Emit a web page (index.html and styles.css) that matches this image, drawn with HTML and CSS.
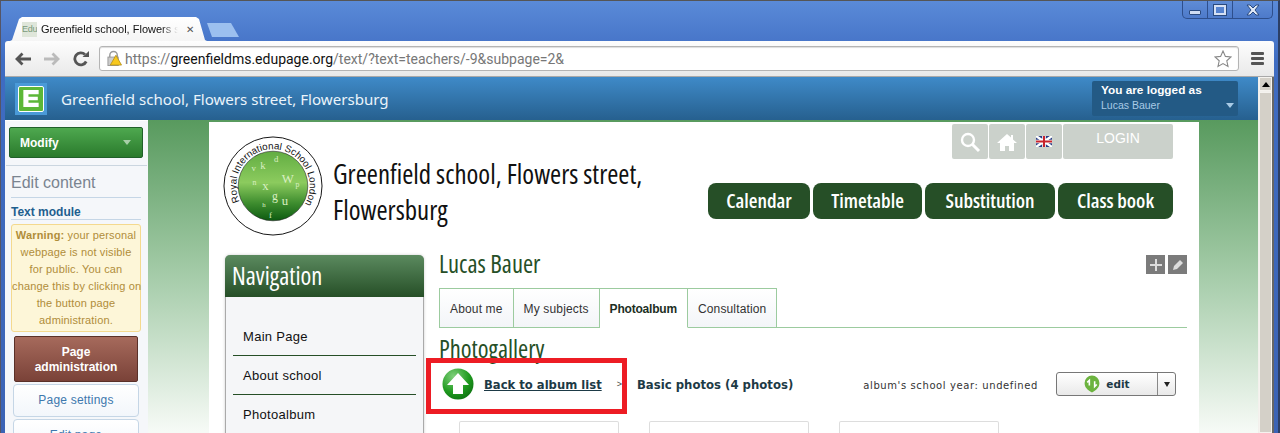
FILE: index.html
```html
<!DOCTYPE html>
<html lang="en">
  <head>
    <meta charset="UTF-8" />
    <title>Greenfield school, Flowers street, Flowersburg</title>
    <link rel="stylesheet" href="styles.css">
  </head>
  <body>
    <div class="browser">
      <div class="tabstrip">
        <div class="tab">
          <span class="favicon">Edu</span>
          <span class="tab-title">Greenfield school, Flowers st</span>
          <span class="tab-close">&#x2715;</span>
        </div>
        <div class="new-tab"></div>
        <div class="win-controls">
          <span class="win-btn"><i class="win-min"></i></span>
          <span class="win-btn"><i class="win-max"></i></span>
          <span class="win-btn win-wide">
            <svg width="16" height="12" viewBox="0 0 16 12"><path d="M2 1h3l3 3 3-3h3l-4 5 4 5h-3L8 8l-3 3H2l4-5z" fill="#dfe8f6" stroke="#2a4a80"/></svg>
          </span>
        </div>
      </div>

      <div class="toolbar">
        <div class="nav-icons">
          <svg width="16" height="16" viewBox="0 0 16 16"><path d="M7.500 2.500 2 8l5.500 5.500M2.500 8H16" fill="none" stroke="#555" stroke-width="2.800"/></svg>
          <svg width="16" height="16" viewBox="0 0 16 16"><path d="M8.500 2.500 14 8l-5.500 5.500M13.500 8H0" fill="none" stroke="#bbb" stroke-width="2.800"/></svg>
          <svg width="16" height="16" viewBox="0 0 16 16"><path d="M13.200 10.500A6 6 0 1 1 12 3.500" fill="none" stroke="#555" stroke-width="2.800"/><path d="M9.500 6H16V0z" fill="#555"/></svg>
        </div>
        <div class="omnibox">
          <svg class="lock" width="15" height="17" viewBox="0 0 16 17">
            <path d="M3 8V5a4 4 0 0 1 8 0v3" fill="none" stroke="#999" stroke-width="1.500"/>
            <rect x="1" y="7" width="11" height="9" fill="#ccc" stroke="#999"/>
            <path d="M9.500 5 15.500 15.500H3.500z" fill="#f7c81e" stroke="#b08a10" stroke-width=".8"/>
          </svg>
          <span class="url"><span class="url-dim">https://</span>greenfieldms.edupage.org<span class="url-dim">/text/?text=teachers/-9&amp;subpage=2&amp;</span></span>
          <svg class="star" width="18" height="18" viewBox="0 0 18 18"><path d="M9 1l2.400 5.400 5.600.6-4.200 3.800 1.200 5.700L9 13.600l-5 2.900 1.200-5.700L1 7l5.600-.6z" fill="#fff" stroke="#888" stroke-width="1.100"/></svg>
        </div>
        <div class="hamburger"><i></i><i></i><i></i></div>
      </div>

      <div class="viewport">
        <div class="page">
          <header class="app-bar">
            <div class="app-logo"><span class="app-logo-e"><svg width="16" height="17" viewBox="0 0 18 20"><path d="M0 0h18v5H6v3h11v4H6v3h12v5H0z" fill="#fff"/></svg></span></div>
            <div class="app-title">Greenfield school, Flowers street, Flowersburg</div>
            <div class="user-box">
              <strong>You are logged as</strong>
              <span>Lucas Bauer</span>
              <i class="user-caret"></i>
            </div>
          </header>

          <div class="app-body">
            <aside class="sidebar">
              <div class="modify-wrap">
                <div class="modify-btn"><span>Modify</span><i class="caret"></i></div>
              </div>
              <div class="side-inner">
                <div class="edit-title">Edit content</div>
                <div class="module-title">Text module</div>
                <div class="warning"><b>Warning:</b> your personal<br>webpage is not visible<br>for public. You can<br>change this by clicking on<br>the button page<br>administration.</div>
                <div class="admin-btn">Page administration</div>
                <div class="side-btn">Page settings</div>
                <div class="side-btn">Edit page</div>
              </div>
            </aside>

            <div class="stage">
              <div class="site">
                <div class="site-head">
                  <svg class="school-logo" width="100" height="100" viewBox="0 0 102 102">
                    <defs>
                      <linearGradient id="ball" x1="0" y1="0" x2="0" y2="1">
                        <stop offset="0" stop-color="#62ad42"/>
                        <stop offset=".45" stop-color="#8ccb5e"/>
                        <stop offset=".75" stop-color="#3d8c2e"/>
                        <stop offset="1" stop-color="#0c5a10"/>
                      </linearGradient>
                      <path id="ring" d="M17 66.800A37.500 37.500 0 1 1 81.700 72.500"/>
                    </defs>
                    <circle cx="51" cy="51" r="50" fill="#fff" stroke="#111" stroke-width="1"/>
                    <circle cx="51" cy="51" r="35.500" fill="url(#ball)" stroke="#222" stroke-width=".6"/>
                    <text class="ring-text"><textPath href="#ring">Royal International School London</textPath></text>
                    <g class="ball-text">
                      <text x="38" y="34" font-size="11">k</text>
                      <text x="52" y="27" font-size="9">d</text>
                      <text x="29" y="36" font-size="9">v</text>
                      <text x="30" y="50" font-size="8">n</text>
                      <text x="40" y="55" font-size="13">x</text>
                      <text x="60" y="48" font-size="13">W</text>
                      <text x="50" y="65" font-size="12">g</text>
                      <text x="60" y="70" font-size="13">u</text>
                      <text x="40" y="72" font-size="7">h</text>
                      <text x="47" y="84" font-size="9">f</text>
                      <text x="74" y="52" font-size="8">p</text>
                    </g>
                  </svg>
                  <h1 class="site-name">Greenfield school, Flowers street,<br>Flowersburg</h1>
                  <div class="head-right">
                    <div class="quick-tools">
                      <span class="tool">
                        <svg width="22" height="22" viewBox="0 0 22 22"><circle cx="9" cy="9" r="6" fill="none" stroke="#fff" stroke-width="2.400"/><path d="M13.500 13.500 20 20" stroke="#fff" stroke-width="3"/></svg>
                      </span>
                      <span class="tool">
                        <svg width="20" height="18" viewBox="0 0 20 18"><path d="M10 1 0 10h3v8h5v-5h4v5h5v-8h3l-4-3.600V2h-2v2.600z" fill="#fff"/></svg>
                      </span>
                      <span class="tool">
                        <svg width="16" height="11" viewBox="0 0 16 11"><rect width="16" height="11" fill="#2b3f86"/><path d="M0 0l16 11M16 0 0 11" stroke="#fff" stroke-width="2.400"/><path d="M8 0v11M0 5.500h16" stroke="#fff" stroke-width="3.600"/><path d="M8 0v11M0 5.500h16" stroke="#c8232c" stroke-width="2"/></svg>
                      </span>
                      <span class="tool tool-login">LOGIN</span>
                    </div>
                    <nav class="main-menu">
                      <a class="menu-btn menu-calendar">Calendar</a>
                      <a class="menu-btn menu-timetable">Timetable</a>
                      <a class="menu-btn menu-subst">Substitution</a>
                      <a class="menu-btn menu-class">Class book</a>
                    </nav>
                  </div>
                </div>

                <div class="site-body">
                  <div class="nav-box">
                    <div class="nav-head">Navigation</div>
                    <ul class="nav-list">
                      <li>Main Page</li>
                      <li>About school</li>
                      <li>Photoalbum</li>
                    </ul>
                  </div>

                  <main class="main-col">
                    <div class="person-row">
                      <h2 class="person">Lucas Bauer</h2>
                      <div class="person-tools">
                        <span class="mini-btn"><svg width="12" height="12" viewBox="0 0 12 12"><path d="M6 0v12M0 6h12" stroke="#ddd" stroke-width="2"/></svg></span>
                        <span class="mini-btn"><svg width="12" height="12" viewBox="0 0 12 12"><path d="M1 11l1-4 6-6 3 3-6 6z" fill="#ddd"/></svg></span>
                      </div>
                    </div>
                    <div class="tabs">
                      <a class="tab-link">About me</a>
                      <a class="tab-link">My subjects</a>
                      <a class="tab-link tab-on">Photoalbum</a>
                      <a class="tab-link">Consultation</a>
                    </div>
                    <h2 class="gallery-title">Photogallery</h2>
                    <div class="album-row">
                      <svg class="back-icon" width="32" height="32" viewBox="0 0 32 32">
                        <defs>
                          <radialGradient id="backg" cx="35%" cy="25%" r="85%">
                            <stop offset="0" stop-color="#7fd07a"/>
                            <stop offset=".6" stop-color="#1f9a1f"/>
                            <stop offset="1" stop-color="#0c6f10"/>
                          </radialGradient>
                        </defs>
                        <circle cx="16" cy="16" r="15.500" fill="url(#backg)"/>
                        <path d="M16 5 27 17h-6v9H11v-9H5z" fill="#fff"/>
                      </svg>
                      <a class="back-link">Back to album list</a>
                      <span class="crumb-sep">&gt;</span>
                      <b class="album-name">Basic photos (4 photos)</b>
                      <span class="album-year">album's school year: undefined</span>
                      <div class="edit-btn">
                        <span class="edit-main">
                          <svg width="16" height="18" viewBox="0 0 15 17"><path d="M7.500 16.500C3 14 .5 11.500.5 7.500a7 7 0 0 1 14 0c0 4-2.500 6.500-7 9z" fill="#6cb33f"/><path d="M5 10V5l-2 2M10 6v5l2-2" fill="none" stroke="#fff" stroke-width="1.500"/></svg>
                          edit
                        </span>
                        <span class="edit-drop"><i></i></span>
                      </div>
                    </div>
                    <div class="photo-grid">
                      <div class="photo"></div>
                      <div class="photo"></div>
                      <div class="photo"></div>
                    </div>
                  </main>
                </div>
              </div>
            </div>
          </div>

          <div class="callout"></div>
        </div>

        <div class="scrollbar">
          <span class="scroll-up"></span>
          <span class="scroll-thumb"></span>
        </div>
      </div>
    </div>
  </body>
</html>
```

FILE: styles.css
```css
* {
  box-sizing: border-box;
}

html,
body {
  margin: 0;
  height: 433px;
  overflow: hidden;
}

body {
  font-family: "Liberation Sans", Arial, sans-serif;
  background: #3b63b5;
}

a {
  text-decoration: none;
  color: inherit;
}

/* browser chrome */
.browser {
  height: 433px;
  padding: 0 4px 0 4px;
  display: flex;
  flex-direction: column;
  background: linear-gradient(#5a8ad8, #3f6cc2 60px, #3b63b5);
  border-top: 1px solid #555;
  border-right: 2px solid #2c3f66;
  border-left: 1px solid #556;
  position: relative;
}

.tabstrip {
  height: 40px;
  display: flex;
  align-items: flex-end;
  flex: none;
  position: relative;
  padding-left: 5px;
}

.tab {
  width: 197px;
  height: 24px;
  background: linear-gradient(#fff, #f5f5f5);
  clip-path: polygon(0 100%, 2px 96%, 9px 8%, 12px 0, 186px 0, 189px 8%, 195px 96%, 197px 100%);
  display: flex;
  align-items: center;
  padding: 0 0 0 12px;
  font-size: 11px;
  color: #111;
}

.favicon {
  width: 15px;
  height: 15px;
  font-size: 9px;
  line-height: 15px;
  color: #7a9a7a;
  background: #dfe6da;
  overflow: hidden;
  flex: none;
  letter-spacing: -0.3px;
}

.tab-title {
  margin-left: 4px;
  width: 137px;
  white-space: nowrap;
  overflow: hidden;
  mask-image: linear-gradient(90deg, #000 88%, transparent);
}

.tab-close {
  font-size: 10px;
  color: #555;
  font-weight: bold;
  margin-left: 8px;
  font-family: "DejaVu Sans", sans-serif;
}

.new-tab {
  width: 32px;
  height: 14px;
  margin: 0 0 4px 0;
  background: #9cc0ef;
  clip-path: polygon(0 0, 24px 0, 100% 100%, 5px 100%);
}

.win-controls {
  margin-left: auto;
  align-self: flex-start;
  display: flex;
  height: 18px;
  margin-right: 1px;
  border: 1px solid #2e4f8c;
  border-top: 0;
  border-radius: 0 0 5px 5px;
  background: linear-gradient(#5f8cd6, #4d7aca);
}

.win-btn {
  width: 25px;
  display: flex;
  align-items: center;
  justify-content: center;
  border-right: 1px solid #2e4f8c;
}

.win-wide {
  width: 39px;
  border-right: 0;
}

.win-min {
  display: block;
  width: 12px;
  height: 5px;
  margin-top: 6px;
  background: #cfdcf2;
  border: 1px solid #2a4a80;
  border-radius: 1px;
}

.win-max {
  display: block;
  width: 12px;
  height: 10px;
  border: 2px solid #d5e0f4;
  outline: 1px solid #2a4a80;
}

.toolbar {
  height: 36px;
  flex: none;
  display: flex;
  align-items: center;
  gap: 10px;
  padding: 0 10px 0 10px;
  background: linear-gradient(#fdfdfd, #e9e9e9);
  border-bottom: 1px solid #a9a9a9;
  border-radius: 3px 3px 0 0;
}

.nav-icons {
  display: flex;
  gap: 13px;
}

.omnibox {
  flex: 1;
  height: 25px;
  display: flex;
  align-items: center;
  gap: 3px;
  padding: 0 6px 0 7px;
  background: #fff;
  border: 1px solid #b4b4b4;
  border-radius: 3px;
  box-shadow: inset 0 1px 1px #ddd;
}

.url {
  flex: 1;
  font-family: "Roboto", sans-serif;
  font-size: 14px;
  color: #111;
  white-space: nowrap;
}

.url-dim {
  color: #777;
}

.hamburger {
  width: 13px;
  margin-left: 2px;
  display: flex;
  flex-direction: column;
  gap: 2px;
}

.hamburger i {
  height: 3px;
  background: #555;
  border-radius: 1px;
}

.viewport {
  flex: 1;
  min-height: 0;
  display: flex;
  overflow: hidden;
}

.page {
  flex: 1;
  min-width: 0;
  display: flex;
  flex-direction: column;
  position: relative;
  background: #f5f7fa;
}

.scrollbar {
  width: 16px;
  flex: none;
  background: #f2f0ec;
  border-right: 2px solid #666;
  padding-left: 1px;
  display: flex;
  flex-direction: column;
}

.scroll-up {
  height: 16px;
  background: #d4d0c8;
  border: 1px solid #f5f3ef;
  position: relative;
}

.scroll-up:after {
  content: "";
  position: absolute;
  left: 2px;
  top: 4px;
  border: 4px solid transparent;
  border-top: 0;
  border-bottom: 5px solid #000;
}

.scroll-thumb {
  height: 400px;
  margin-top: 1px;
  background: #d4d0c8;
  border: 1px solid #f5f3ef;
}

/* edupage bar */
.app-bar {
  height: 43px;
  flex: none;
  display: flex;
  align-items: center;
  padding: 0 20px 0 10px;
  background: linear-gradient(#3f8ac8, #26608f);
}

.app-logo {
  width: 32px;
  height: 32px;
  padding: 3px;
  background: #4a9ad8;
}

.app-logo-e {
  display: flex;
  align-items: center;
  justify-content: center;
  width: 100%;
  height: 100%;
  background: #5cb738;
  border: 1px solid #fff;
  border-radius: 2px;
}

.app-title {
  margin-left: 14px;
  font-family: "Noto Sans", sans-serif;
  font-size: 15.100px;
  color: #eaf4fb;
}

.user-box {
  margin-left: auto;
  width: 146px;
  height: 35px;
  padding: 2px 0 0 9px;
  background: #235a85;
  border-radius: 2px;
  font-size: 10.500px;
  color: #a9cbe6;
  position: relative;
  display: flex;
  flex-direction: column;
  gap: 2px;
}

.user-box strong {
  color: #fff;
  font-size: 11.800px;
}

.user-caret {
  position: absolute;
  right: 4px;
  bottom: 8px;
  border: 4px solid transparent;
  border-bottom: 0;
  border-top: 5px solid #a9cbe6;
}

.app-body {
  flex: 1;
  min-height: 0;
  display: flex;
}

/* left panel */
.sidebar {
  width: 143px;
  flex: none;
  background: #f5f7fa;
  border-top: 1px solid #fff;
  display: flex;
  flex-direction: column;
}

.modify-wrap {
  padding: 6px 4px 7px 3px;
  margin: 0 1px;
  border-bottom: 1px solid #cbd6e0;
}

.modify-btn {
  height: 31px;
  display: flex;
  align-items: center;
  justify-content: space-between;
  padding: 0 11px 0 10px;
  background: linear-gradient(#4ea84f, #2a7a2c);
  border: 1px solid #20602a;
  border-radius: 2px;
  color: #fff;
  font-size: 12px;
  font-weight: bold;
}

.caret {
  border: 4px solid transparent;
  border-bottom: 0;
  border-top: 5px solid #a8cfa8;
}

.side-inner {
  padding: 8px 7px 0 6px;
}

.edit-title {
  font-size: 16px;
  color: #7a8490;
  padding-bottom: 5px;
  border-bottom: 1px solid #c5d6e6;
}

.module-title {
  margin-top: 7px;
  font-size: 12px;
  font-weight: bold;
  color: #1f5f8f;
  border-bottom: 1px solid #c5d6e6;
}

.warning {
  margin-top: 4px;
  padding: 2px 0 1px;
  height: 108px;
  background: #fdf6d8;
  border: 1px solid #f4d98e;
  border-radius: 3px;
  font-size: 11px;
  line-height: 17px;
  letter-spacing: 0.15px;
  white-space: nowrap;
  color: #b08d3a;
  text-align: center;
}

.admin-btn {
  margin: 4px 3px 0 3px;
  height: 46px;
  padding: 8px 8px 0;
  background: linear-gradient(#a66a5c, #7a4238);
  border: 1px solid #5a3028;
  border-radius: 2px;
  color: #fff;
  font-size: 12px;
  font-weight: bold;
  line-height: 15px;
  text-align: center;
}

.side-btn {
  margin: 2px 2px 0 2px;
  height: 33px;
  line-height: 31px;
  background: linear-gradient(#fff, #f2f6fb);
  border: 1px solid #c5d6e6;
  border-radius: 4px;
  color: #3d78ad;
  font-size: 12px;
  letter-spacing: 0.2px;
  text-align: center;
}

/* site */
.stage {
  flex: 1;
  min-width: 0;
  padding: 2px 59px 0 61px;
  background: linear-gradient(#589a5e, #a2caa6 150px, #f6faf6 311px);
}

.site {
  height: 400px;
  background: #fff;
  padding: 0 12px 0 14px;
}

.site-head {
  display: flex;
  height: 128px;
  position: relative;
}

.school-logo {
  flex: none;
  margin-top: 14px;
}

.ring-text {
  font-family: "Liberation Sans", sans-serif;
  font-size: 10px;
  fill: #111;
}

.ball-text {
  font-family: "Liberation Serif", serif;
  fill: #d9efc2;
}

.site-name,
.person,
.gallery-title,
.menu-btn,
.nav-head {
  font-family: "Open Sans", "Roboto", sans-serif;
  font-stretch: 75%;
  font-weight: 500;
}

.site-name {
  flex: none;
  margin: 34px 0 0 10px;
  font-size: 26.900px;
  line-height: 36px;
  color: #111;
}

.head-right {
  margin-left: auto;
  margin-right: 14px;
  display: flex;
  flex-direction: column;
  align-items: flex-end;
}

.quick-tools {
  display: flex;
  gap: 1px;
  margin-top: 2px;
}

.tool {
  width: 36px;
  height: 35px;
  background: #cbd1cb;
  border-radius: 2px;
  display: flex;
  align-items: center;
  justify-content: center;
}

.tool-login {
  width: 110px;
  align-items: flex-start;
  padding-top: 6px;
  color: #fff;
  font-size: 14px;
}

.main-menu {
  display: flex;
  gap: 3px;
  margin-top: 24px;
}

.menu-btn {
  height: 36px;
  line-height: 35px;
  background: #264f27;
  border-radius: 8px;
  color: #fff;
  font-size: 20px;
  font-weight: 600;
  text-align: center;
}

.menu-calendar {
  width: 102px;
}

.menu-timetable {
  width: 109px;
}

.menu-subst {
  width: 130px;
}

.menu-class {
  width: 115px;
}

.site-body {
  display: flex;
  gap: 15px;
}

.nav-box {
  width: 199px;
  height: 300px;
  margin-left: 2px;
  margin-top: 5px;
  flex: none;
  background: #f5f6f8;
  border: 1px solid #aaa;
  border-top: 0;
  border-radius: 5px 5px 0 0;
  box-shadow: 0 0 3px #ccc;
}

.nav-head {
  height: 42px;
  padding-left: 7px;
  line-height: 42px;
  margin: 0 -1px;
  border-radius: 5px 5px 0 0;
  background: linear-gradient(#5b8a5f, #264f27);
  color: #fff;
  font-size: 24.500px;
}

.nav-list {
  list-style: none;
  margin: 0;
  padding: 20px 7px 0;
}

.nav-list li {
  height: 39px;
  padding: 0 0 0 10px;
  line-height: 40px;
  font-size: 13px;
  letter-spacing: 0.3px;
  color: #111;
  border-bottom: 1px solid #264f27;
}

.main-col {
  flex: 1;
  min-width: 0;
}

.person-row {
  display: flex;
  height: 38px;
  justify-content: space-between;
}

.person {
  margin: 0;
  font-size: 24.500px;
  line-height: 28px;
  color: #264f27;
}

.person-tools {
  display: flex;
  gap: 3px;
  padding-top: 5px;
}

.mini-btn {
  width: 19px;
  height: 19px;
  background: #7b7b7b;
  display: flex;
  align-items: center;
  justify-content: center;
}

.tabs {
  display: flex;
  height: 40px;
  border-bottom: 1px solid #9ccb9f;
}

.tab-link {
  height: 40px;
  padding: 0 10px;
  line-height: 40px;
  background: linear-gradient(#fff, #f3f5f8);
  border: 1px solid #9ccb9f;
  border-left-width: 0;
  font-size: 12px;
  letter-spacing: 0.15px;
  color: #333;
}

.tab-link:first-child {
  border-left-width: 1px;
}

.tab-on {
  background: #fff;
  border-bottom-color: #fff;
  font-weight: bold;
  letter-spacing: -0.2px;
  color: #1d2f1f;
}

.gallery-title {
  margin: 5px 0 0;
  height: 29px;
  font-size: 24.500px;
  line-height: 31px;
  color: #264f27;
}

.album-row {
  display: flex;
  align-items: center;
  height: 32px;
  padding-left: 3px;
  margin-top: 6px;
}

.back-link {
  margin-left: 10px;
  padding-top: 1px;
  font-family: "DejaVu Sans", sans-serif;
  font-size: 11.600px;
  font-weight: bold;
  color: #1d3a46;
  text-decoration: underline;
}

.crumb-sep {
  margin-left: 15px;
  font-size: 9px;
  color: #444;
}

.album-name {
  margin-left: 15px;
  padding-top: 1px;
  font-family: "DejaVu Sans", sans-serif;
  font-size: 11.700px;
  color: #1d3a46;
}

.album-year {
  margin-left: auto;
  font-family: "DejaVu Sans", sans-serif;
  font-size: 10px;
  letter-spacing: 0.6px;
  color: #333;
  padding-top: 3px;
}

.edit-btn {
  margin-left: 18px;
  margin-right: 11px;
  width: 120px;
  height: 24px;
  display: flex;
  background: linear-gradient(#fff, #e9e9e9);
  border: 1px solid #777;
  border-radius: 3px;
}

.edit-main {
  flex: 1;
  display: flex;
  align-items: center;
  justify-content: center;
  gap: 6px;
  font-family: "DejaVu Sans", sans-serif;
  font-size: 10.500px;
  font-weight: bold;
  color: #1d3a46;
  border-right: 1px solid #888;
}

.edit-drop {
  width: 17px;
  display: flex;
  align-items: center;
  justify-content: center;
}

.edit-drop i {
  border: 3px solid transparent;
  border-bottom: 0;
  border-top: 5px solid #222;
}

.photo-grid {
  display: flex;
  gap: 30px;
  margin: 21px 0 0 20px;
}

.photo {
  width: 160px;
  height: 120px;
  background: #fff;
  border: 1px solid #ddd;
  border-bottom-width: 2px;
  border-radius: 2px 2px 0 0;
}

/* red annotation drawn over the screenshot */
.callout {
  position: absolute;
  left: 421px;
  top: 281px;
  width: 201px;
  height: 56px;
  border: 5px solid #ed1c24;
  pointer-events: none;
}
```
